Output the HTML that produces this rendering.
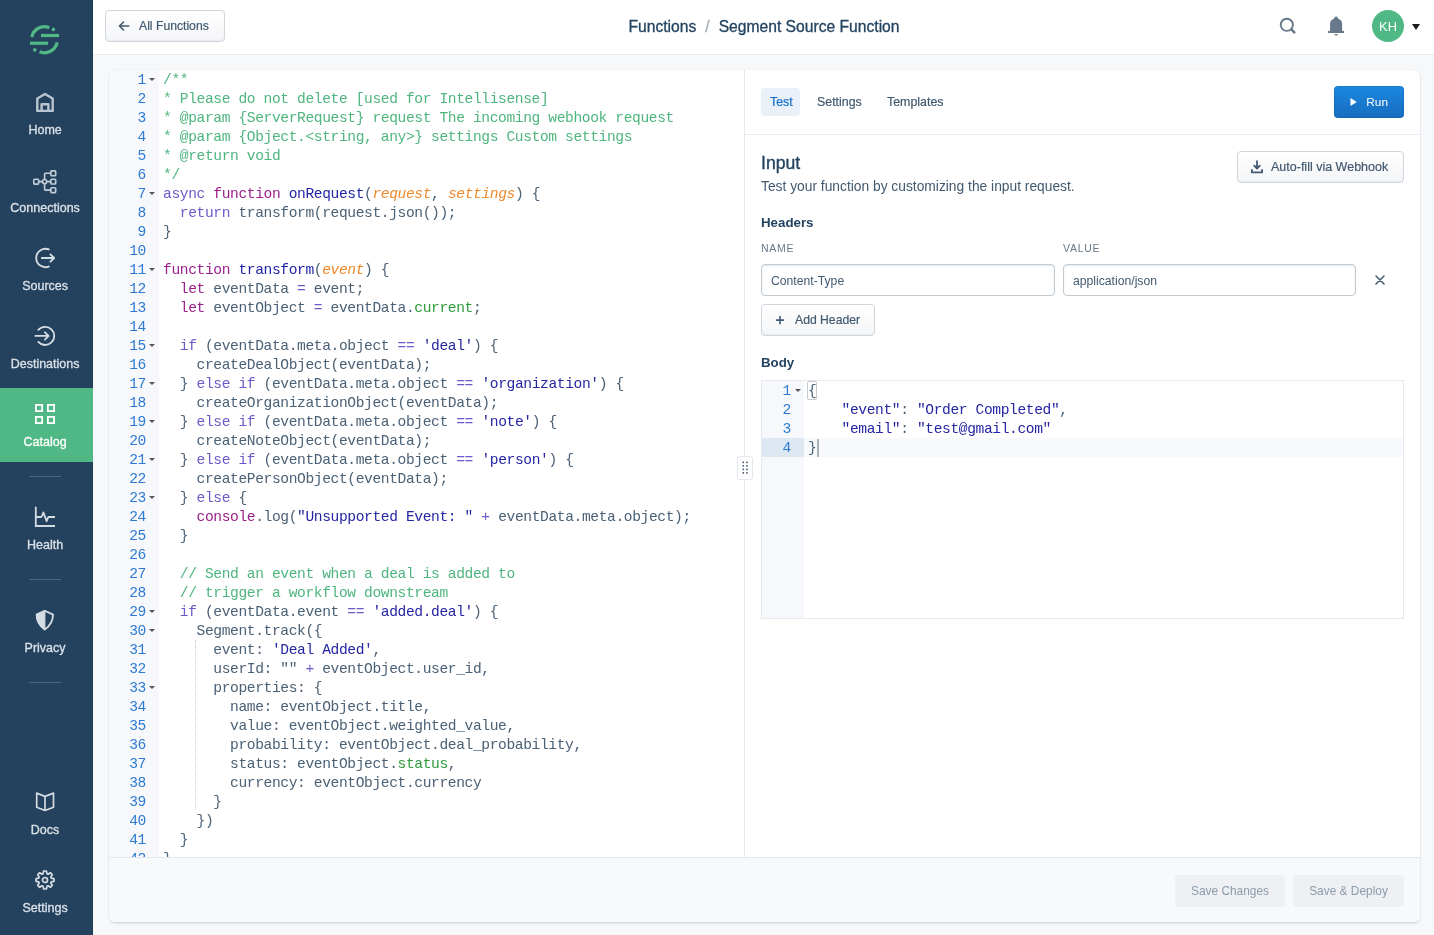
<!DOCTYPE html>
<html><head><meta charset="utf-8">
<style>
*{box-sizing:border-box;margin:0;padding:0}
html,body{width:1434px;height:935px;overflow:hidden;background:#F7F8FA;font-family:"Liberation Sans",sans-serif;color:#425A70}
#side{position:absolute;left:0;top:0;width:93px;height:935px;background:#24415D;border-right:1px solid #1F3A54}
.lbl{position:absolute;left:0;width:90.2px;text-align:center;color:#DAE1E8;font-size:12.5px;line-height:16px;white-space:nowrap;-webkit-text-stroke:0.3px currentColor}
.sep{position:absolute;left:29px;width:32px;height:1px;background:#4A6580}
#hdr{position:absolute;left:93px;top:0;width:1341px;height:55px;background:#fff;border-bottom:1px solid #E8EBEF}
.btn{position:absolute;background:linear-gradient(#FFFFFF,#F4F5F7);border:1px solid #D0D6DD;border-radius:4px;color:#425A70;font-size:12.2px;-webkit-text-stroke:0.2px currentColor;box-shadow:inset 0 -1px 1px rgba(67,90,111,.06)}
#card{position:absolute;left:109px;top:70px;width:1311px;height:852px;background:#fff;border-radius:6px;box-shadow:0 0 1px rgba(67,90,111,.35),0 2px 3px -1px rgba(67,90,111,.25);overflow:hidden}
#ed{position:absolute;left:0;top:0;width:635px;height:787px;overflow:hidden;font-family:"Liberation Mono",monospace;font-size:14.6px;letter-spacing:-0.381px;line-height:19px}
#gut{position:absolute;left:0;top:0;width:50px;height:787px;background:#F6F8FB}
.ln{position:absolute;left:0;width:37px;text-align:right;color:#2D7AD2}
.fd{position:absolute;left:40.4px;width:0;height:0;margin-top:-1px;border-left:3.1px solid transparent;border-right:3.1px solid transparent;border-top:3.9px solid #555}
.cl{position:absolute;left:54px;white-space:pre;color:#4B6176}
.c{color:#4EB57E}.k{color:#6A5BC9}.f{color:#9A1F8B}.n{color:#2024A8}.p{color:#EE8A2C;font-style:italic}.s{color:#2526A3}.g{color:#2E9B3A}.o{color:#6A5BC9}
#div{position:absolute;left:635px;top:0;width:1px;height:787px;background:#E4E7EB}
#rp{position:absolute;left:636px;top:0;width:675px;height:787px}
#foot{position:absolute;left:0;top:787px;width:1311px;height:65px;background:#F8F9FB;border-top:1px solid #E4E7EB}
.gb{position:absolute;background:#EFF0F3;border-radius:4px;color:#8C9CAB;font-size:11.9px;text-align:center;line-height:32px;height:32px}
.tab{position:absolute;top:24px;font-size:12.4px;line-height:16px;color:#425A70;-webkit-text-stroke:0.2px currentColor}
.lab{position:absolute;top:171px;font-size:10.5px;line-height:14px;letter-spacing:.7px;color:#66788A}
.inp{position:absolute;top:194px;height:32px;border:1px solid #C2CAD2;border-radius:4px;box-shadow:inset 0 1px 2px rgba(67,90,111,.14);padding-left:9px;font-size:12.2px;line-height:32px;color:#425A70}
#card,#side,#hdr{will-change:transform}
</style></head><body>
<div id="side">
 <svg style="position:absolute;left:29px;top:25px" width="32" height="30" viewBox="0 0 32 30" fill="none" stroke="#52B886" stroke-width="3.2">
  <g transform="translate(0.45 0)">
  <path d="M2.28 12.05 A13 13 0 0 1 19.87 2.7"/>
  <path d="M27.72 17.45 A13 13 0 0 1 10.13 26.8"/>
  <path d="M11.55 10.5 H29.55"/>
  <path d="M0.45 18.2 H18.65"/>
  <circle cx="23.95" cy="4.4" r="1.8" fill="#52B886" stroke="none"/>
  <circle cx="5.35" cy="24.9" r="1.8" fill="#52B886" stroke="none"/>
  </g>
 </svg>
 <svg style="position:absolute;left:35px;top:92px" width="20" height="21" viewBox="0 0 20 21" fill="none" stroke="#B9C5D0" stroke-width="2.4" stroke-linejoin="round">
  <path d="M2.3 18.9 V6.6 L10 1.9 L17.7 6.6 V18.9 Z"/>
  <path d="M6.6 18.9 V12.3 H13.4 V18.9"/>
 </svg>
 <div class="lbl" style="top:122px">Home</div>
 <svg style="position:absolute;left:32px;top:169px" width="26" height="26" viewBox="0 0 26 26" fill="none" stroke="#C3CED8" stroke-width="1.6">
  <rect x="1.8" y="10.2" width="4.8" height="4.9" rx="0.8"/>
  <circle cx="12.6" cy="12.6" r="2.1"/>
  <path d="M6.6 12.6 H10.5 M14.7 12.6 H18.9 M12.6 10.5 V5 Q12.6 4.2 13.4 4.2 H18.9 M12.6 14.7 V20.3 Q12.6 21.1 13.4 21.1 H18.9"/>
  <rect x="18.9" y="1.9" width="4.8" height="4.9" rx="0.8"/>
  <rect x="18.9" y="10.2" width="4.8" height="4.8" rx="0.8"/>
  <rect x="18.9" y="18.8" width="4.8" height="4.8" rx="0.8"/>
 </svg>
 <div class="lbl" style="top:200px">Connections</div>
 <svg style="position:absolute;left:34px;top:247px" width="22" height="22" viewBox="0 0 22 22" fill="none" stroke="#D6DEE5" stroke-width="1.8" stroke-linecap="round" stroke-linejoin="round">
  <path d="M14.8 2.45 A9.2 9.2 0 1 0 14.8 19.55"/>
  <path d="M7.8 11 H20.2 M16.4 7.3 L20.2 11 L16.4 14.7"/>
 </svg>
 <div class="lbl" style="top:278px">Sources</div>
 <svg style="position:absolute;left:34px;top:325px" width="22" height="22" viewBox="0 0 22 22" fill="none" stroke="#D6DEE5" stroke-width="1.8" stroke-linecap="round" stroke-linejoin="round">
  <path d="M4.3 4.9 A9.1 9.1 0 1 1 4.3 16.9"/>
  <path d="M1.4 10.9 H14.6 M10.9 7.3 L14.6 10.9 L10.9 14.6"/>
 </svg>
 <div class="lbl" style="top:356px">Destinations</div>
 <div style="position:absolute;left:0;top:388px;width:93px;height:74px;background:#4FB884;z-index:1"></div>
 <svg style="position:absolute;left:34px;top:403px;z-index:2" width="22" height="22" viewBox="0 0 22 22" fill="none" stroke="#fff" stroke-width="1.8">
  <rect x="1.9" y="1.9" width="6.2" height="6.2"/><rect x="13.9" y="1.9" width="6.2" height="6.2"/>
  <rect x="1.9" y="13.9" width="6.2" height="6.2"/><rect x="13.9" y="13.9" width="6.2" height="6.2"/>
 </svg>
 <div class="lbl" style="top:434px;color:#fff;z-index:2">Catalog</div>
 <div class="sep" style="top:476px"></div>
 <svg style="position:absolute;left:34px;top:506px" width="22" height="22" viewBox="0 0 22 22" fill="none" stroke="#D3DBE2" stroke-width="1.8">
  <path d="M1.8 0.8 V20 H21"/>
  <path d="M1.8 11 H7 Q7.6 11 8 10 L9.4 6.4 L12.6 15.2 L14 11.6 Q14.3 11 15 11 H21" stroke-linejoin="round"/>
 </svg>
 <div class="lbl" style="top:537px">Health</div>
 <div class="sep" style="top:579px"></div>
 <svg style="position:absolute;left:35px;top:609px" width="20" height="22" viewBox="0 0 20 22" stroke="#D6DEE5" stroke-width="1.8" stroke-linejoin="round">
  <path d="M9.8 1.8 L18 5.6 C18 12 15 17 9.8 20.6 C4.6 17 1.6 12 1.6 5.6 Z" fill="none"/>
  <path d="M9.8 1.8 L1.6 5.6 C1.6 12 4.6 17 9.8 20.6 Z" fill="#D6DEE5" stroke-width="1.2"/>
 </svg>
 <div class="lbl" style="top:640px">Privacy</div>
 <div class="sep" style="top:682px"></div>
 <svg style="position:absolute;left:34px;top:791px" width="22" height="21" viewBox="0 0 22 21" fill="none" stroke="#D3DBE2" stroke-width="1.7" stroke-linejoin="round">
  <path d="M11 5.4 L2.7 2.1 V16.2 L11 19.5 L19.5 16.2 V2.1 Z"/>
  <path d="M11 5.4 V19.5"/>
 </svg>
 <div class="lbl" style="top:822px">Docs</div>
 <svg style="position:absolute;left:34px;top:869px" width="22" height="22" viewBox="0 0 22 22" fill="none" stroke="#D6DEE5" stroke-width="1.7" stroke-linejoin="round">
  <path d="M9.07 4.69 L9.59 2.11 A9.0 9.0 0 0 1 12.41 2.11 L12.93 4.69 A6.6 6.6 0 0 1 14.10 5.17 L16.29 3.72 A9.0 9.0 0 0 1 18.28 5.71 L16.83 7.90 A6.6 6.6 0 0 1 17.31 9.07 L19.89 9.59 A9.0 9.0 0 0 1 19.89 12.41 L17.31 12.93 A6.6 6.6 0 0 1 16.83 14.10 L18.28 16.29 A9.0 9.0 0 0 1 16.29 18.28 L14.10 16.83 A6.6 6.6 0 0 1 12.93 17.31 L12.41 19.89 A9.0 9.0 0 0 1 9.59 19.89 L9.07 17.31 A6.6 6.6 0 0 1 7.90 16.83 L5.71 18.28 A9.0 9.0 0 0 1 3.72 16.29 L5.17 14.10 A6.6 6.6 0 0 1 4.69 12.93 L2.11 12.41 A9.0 9.0 0 0 1 2.11 9.59 L4.69 9.07 A6.6 6.6 0 0 1 5.17 7.90 L3.72 5.71 A9.0 9.0 0 0 1 5.71 3.72 L7.90 5.17 A6.6 6.6 0 0 1 9.07 4.69 Z"/>
  <circle cx="11" cy="11" r="2.5"/>
 </svg>
 <div class="lbl" style="top:900px">Settings</div>
</div>
<div id="hdr">
 <div class="btn" style="left:12px;top:10px;width:120px;height:32px">
  <svg style="position:absolute;left:12px;top:9px" width="12" height="12" viewBox="0 0 12 12" fill="none" stroke="#425A70" stroke-width="1.6" stroke-linecap="round" stroke-linejoin="round"><path d="M10.8 6 H1.6 M5.6 2 L1.4 6 L5.6 10"/></svg>
  <span style="position:absolute;left:33px;top:7px;line-height:16px">All Functions</span>
 </div>
 <div style="position:absolute;left:535.5px;top:17.2px;font-size:15.65px;line-height:20px;color:#234361;-webkit-text-stroke:0.3px currentColor;white-space:nowrap">Functions<span style="color:#A6B1BB;margin:0 9px 0 9px">/</span>Segment Source Function</div>
 <svg style="position:absolute;left:1186px;top:17px" width="18" height="18" viewBox="0 0 18 18" fill="none" stroke="#66788A" stroke-linecap="round"><circle cx="7.8" cy="7.8" r="6.1" stroke-width="1.9"/><path d="M12.6 12.6 L15.3 15.3" stroke-width="2.6"/></svg>
 <svg style="position:absolute;left:1234px;top:15px" width="18" height="22" viewBox="0 0 18 22" fill="#66788A"><path d="M3.1 16 V8.8 C3.1 5.3 5.6 3.4 9.1 3.4 C12.6 3.4 15.1 5.3 15.1 8.8 V16 Z"/><rect x="1.1" y="15.9" width="16" height="2.1"/><circle cx="9.1" cy="3.3" r="1.9"/><path d="M7 19 H11.2 L9.1 21.1 Z"/></svg>
 <div style="position:absolute;left:1279px;top:10px;width:32px;height:32px;border-radius:50%;background:#4FB884;color:#fff;font-size:12.8px;line-height:33px;text-align:center">KH</div>
 <div style="position:absolute;left:1318.5px;top:23.5px;width:0;height:0;border-left:4.8px solid transparent;border-right:4.8px solid transparent;border-top:6.2px solid #1B1B1B"></div>
</div>
<div id="card">
 <div id="ed"><div id="gut"></div>
<div style="position:absolute;left:86px;top:570px;width:0;height:170px;border-left:1px dotted #C8CDD2"></div>
<div class="ln" style="top:1px">1</div>
<div class="fd" style="top:9px"></div>
<div class="cl" style="top:1px"><span class="c">/**</span></div>
<div class="ln" style="top:20px">2</div>
<div class="cl" style="top:20px"><span class="c">* Please do not delete [used for Intellisense]</span></div>
<div class="ln" style="top:39px">3</div>
<div class="cl" style="top:39px"><span class="c">* @param {ServerRequest} request The incoming webhook request</span></div>
<div class="ln" style="top:58px">4</div>
<div class="cl" style="top:58px"><span class="c">* @param {Object.&lt;string, any&gt;} settings Custom settings</span></div>
<div class="ln" style="top:77px">5</div>
<div class="cl" style="top:77px"><span class="c">* @return void</span></div>
<div class="ln" style="top:96px">6</div>
<div class="cl" style="top:96px"><span class="c">*/</span></div>
<div class="ln" style="top:115px">7</div>
<div class="fd" style="top:123px"></div>
<div class="cl" style="top:115px"><span class="k">async</span> <span class="f">function</span> <span class="n">onRequest</span>(<span class="p">request</span>, <span class="p">settings</span>) {</div>
<div class="ln" style="top:134px">8</div>
<div class="cl" style="top:134px">  <span class="k">return</span> transform(request.json());</div>
<div class="ln" style="top:153px">9</div>
<div class="cl" style="top:153px">}</div>
<div class="ln" style="top:172px">10</div>
<div class="cl" style="top:172px"></div>
<div class="ln" style="top:191px">11</div>
<div class="fd" style="top:199px"></div>
<div class="cl" style="top:191px"><span class="f">function</span> <span class="n">transform</span>(<span class="p">event</span>) {</div>
<div class="ln" style="top:210px">12</div>
<div class="cl" style="top:210px">  <span class="f">let</span> eventData <span class="o">=</span> event;</div>
<div class="ln" style="top:229px">13</div>
<div class="cl" style="top:229px">  <span class="f">let</span> eventObject <span class="o">=</span> eventData.<span class="g">current</span>;</div>
<div class="ln" style="top:248px">14</div>
<div class="cl" style="top:248px"></div>
<div class="ln" style="top:267px">15</div>
<div class="fd" style="top:275px"></div>
<div class="cl" style="top:267px">  <span class="k">if</span> (eventData.meta.object <span class="o">==</span> <span class="s">&#x27;deal&#x27;</span>) {</div>
<div class="ln" style="top:286px">16</div>
<div class="cl" style="top:286px">    createDealObject(eventData);</div>
<div class="ln" style="top:305px">17</div>
<div class="fd" style="top:313px"></div>
<div class="cl" style="top:305px">  } <span class="k">else</span> <span class="k">if</span> (eventData.meta.object <span class="o">==</span> <span class="s">&#x27;organization&#x27;</span>) {</div>
<div class="ln" style="top:324px">18</div>
<div class="cl" style="top:324px">    createOrganizationObject(eventData);</div>
<div class="ln" style="top:343px">19</div>
<div class="fd" style="top:351px"></div>
<div class="cl" style="top:343px">  } <span class="k">else</span> <span class="k">if</span> (eventData.meta.object <span class="o">==</span> <span class="s">&#x27;note&#x27;</span>) {</div>
<div class="ln" style="top:362px">20</div>
<div class="cl" style="top:362px">    createNoteObject(eventData);</div>
<div class="ln" style="top:381px">21</div>
<div class="fd" style="top:389px"></div>
<div class="cl" style="top:381px">  } <span class="k">else</span> <span class="k">if</span> (eventData.meta.object <span class="o">==</span> <span class="s">&#x27;person&#x27;</span>) {</div>
<div class="ln" style="top:400px">22</div>
<div class="cl" style="top:400px">    createPersonObject(eventData);</div>
<div class="ln" style="top:419px">23</div>
<div class="fd" style="top:427px"></div>
<div class="cl" style="top:419px">  } <span class="k">else</span> {</div>
<div class="ln" style="top:438px">24</div>
<div class="cl" style="top:438px">    <span class="f">console</span>.log(<span class="s">&quot;Unsupported Event: &quot;</span> <span class="o">+</span> eventData.meta.object);</div>
<div class="ln" style="top:457px">25</div>
<div class="cl" style="top:457px">  }</div>
<div class="ln" style="top:476px">26</div>
<div class="cl" style="top:476px"></div>
<div class="ln" style="top:495px">27</div>
<div class="cl" style="top:495px">  <span class="c">// Send an event when a deal is added to</span></div>
<div class="ln" style="top:514px">28</div>
<div class="cl" style="top:514px">  <span class="c">// trigger a workflow downstream</span></div>
<div class="ln" style="top:533px">29</div>
<div class="fd" style="top:541px"></div>
<div class="cl" style="top:533px">  <span class="k">if</span> (eventData.event <span class="o">==</span> <span class="s">&#x27;added.deal&#x27;</span>) {</div>
<div class="ln" style="top:552px">30</div>
<div class="fd" style="top:560px"></div>
<div class="cl" style="top:552px">    Segment.track({</div>
<div class="ln" style="top:571px">31</div>
<div class="cl" style="top:571px">      event: <span class="s">&#x27;Deal Added&#x27;</span>,</div>
<div class="ln" style="top:590px">32</div>
<div class="cl" style="top:590px">      userId: &quot;&quot; <span class="o">+</span> eventObject.user_id,</div>
<div class="ln" style="top:609px">33</div>
<div class="fd" style="top:617px"></div>
<div class="cl" style="top:609px">      properties: {</div>
<div class="ln" style="top:628px">34</div>
<div class="cl" style="top:628px">        name: eventObject.title,</div>
<div class="ln" style="top:647px">35</div>
<div class="cl" style="top:647px">        value: eventObject.weighted_value,</div>
<div class="ln" style="top:666px">36</div>
<div class="cl" style="top:666px">        probability: eventObject.deal_probability,</div>
<div class="ln" style="top:685px">37</div>
<div class="cl" style="top:685px">        status: eventObject.<span class="g">status</span>,</div>
<div class="ln" style="top:704px">38</div>
<div class="cl" style="top:704px">        currency: eventObject.currency</div>
<div class="ln" style="top:723px">39</div>
<div class="cl" style="top:723px">      }</div>
<div class="ln" style="top:742px">40</div>
<div class="cl" style="top:742px">    })</div>
<div class="ln" style="top:761px">41</div>
<div class="cl" style="top:761px">  }</div>
<div class="ln" style="top:780px">42</div>
<div class="cl" style="top:780px">}</div>
</div>
 <div id="div"></div>
 <div style="position:absolute;left:628px;top:386px;width:15.5px;height:24px;background:#fff;border:1px solid #E4E7EB;border-radius:2.5px">
  <svg style="position:absolute;left:4px;top:4.4px" width="7" height="13" viewBox="0 0 7 13" fill="#3A5068"><circle cx="1.3" cy="1.3" r=".9"/><circle cx="5" cy="1.3" r=".9"/><circle cx="1.3" cy="4.8" r=".9"/><circle cx="5" cy="4.8" r=".9"/><circle cx="1.3" cy="8.3" r=".9"/><circle cx="5" cy="8.3" r=".9"/><circle cx="1.3" cy="11.8" r=".9"/><circle cx="5" cy="11.8" r=".9"/></svg>
 </div>
 <div id="rp">
 <div style="position:absolute;left:16px;top:18px;width:39px;height:28px;border-radius:4px;background:#EAF0F8"></div>
 <div class="tab" style="left:25px;color:#1070CA">Test</div>
 <div class="tab" style="left:72px">Settings</div>
 <div class="tab" style="left:142px">Templates</div>
 <div style="position:absolute;left:589px;top:16px;width:70px;height:32px;border-radius:4px;background:linear-gradient(#1B87E0,#176DBF);box-shadow:inset 0 0 0 1px rgba(0,0,0,.08)">
  <svg style="position:absolute;left:15.8px;top:11px" width="8" height="10" viewBox="0 0 8 10"><path d="M0.5 1 L6.8 5 L0.5 9 Z" fill="#fff"/></svg>
  <span style="position:absolute;left:32.3px;top:8px;font-size:11.8px;line-height:16px;color:#fff">Run</span>
 </div>
 <div style="position:absolute;left:0;top:64px;width:675px;height:1px;background:#E8EBEF"></div>
 <div style="position:absolute;left:16px;top:82px;font-size:17.6px;line-height:22px;color:#234361;-webkit-text-stroke:0.35px #234361">Input</div>
 <div style="position:absolute;left:16px;top:108px;font-size:13.8px;line-height:18px;color:#425A70;white-space:nowrap">Test your function by customizing the input request.</div>
 <div class="btn" style="left:492px;top:81px;width:167px;height:32px">
  <svg style="position:absolute;left:12px;top:8px" width="14" height="14" viewBox="0 0 14 14" fill="none" stroke="#425A70" stroke-width="1.8" stroke-linecap="round" stroke-linejoin="round"><path d="M7 1.2 V8.4 M4.2 5.7 L7 8.5 L9.8 5.7 M1.9 9.8 V12.4 H12.1 V9.8"/></svg>
  <span style="position:absolute;left:33px;top:7px;line-height:16px;font-size:12.5px">Auto-fill via Webhook</span>
 </div>
 <div style="position:absolute;left:16px;top:143.7px;font-size:13.3px;line-height:17px;font-weight:bold;color:#234361">Headers</div>
 <div class="lab" style="left:16px">NAME</div>
 <div class="lab" style="left:318px">VALUE</div>
 <div class="inp" style="left:16px;width:294px">Content-Type</div>
 <div class="inp" style="left:318px;width:293px">application/json</div>
 <svg style="position:absolute;left:630px;top:205px" width="10" height="10" viewBox="0 0 10 10" stroke="#425A70" stroke-width="1.55" stroke-linecap="round"><path d="M1 1 L9 9 M9 1 L1 9"/></svg>
 <div class="btn" style="left:16px;top:234px;width:114px;height:32px">
  <svg style="position:absolute;left:13px;top:10px" width="10" height="10" viewBox="0 0 10 10" stroke="#425A70" stroke-width="1.6" stroke-linecap="butt"><path d="M5 1 V9.2 M0.9 5.1 H9.1"/></svg>
  <span style="position:absolute;left:33px;top:7px;line-height:16px">Add Header</span>
 </div>
 <div style="position:absolute;left:16px;top:283.7px;font-size:13.3px;line-height:17px;font-weight:bold;color:#234361">Body</div>
 <div id="body" style="position:absolute;left:16px;top:310px;width:643px;height:239px;border:1px solid #E6E9ED;font-family:'Liberation Mono',monospace;font-size:14.6px;letter-spacing:-0.381px;line-height:19px;overflow:hidden">
  <div style="position:absolute;left:0;top:0;width:42px;height:237px;background:#F6F8FB"></div>
  <div style="position:absolute;left:42px;top:57px;width:600px;height:19px;background:#F7F9FC"></div>
  <div style="position:absolute;left:0;top:57px;width:42px;height:19px;background:#DDE8F3"></div>
  <div class="ln" style="top:1px;width:29px">1</div><div class="fd" style="left:33px;top:9px"></div>
  <div class="ln" style="top:20px;width:29px">2</div>
  <div class="ln" style="top:39px;width:29px">3</div>
  <div class="ln" style="top:58px;width:29px">4</div>
  <div style="position:absolute;left:45px;top:0;width:10px;height:19px;border:1px solid #C3CAD1;border-radius:2px"></div>
  <div class="cl" style="left:46px;top:1px">{</div>
  <div class="cl" style="left:46px;top:20px">    <span class="s">"event"</span>: <span class="s">"Order Completed"</span>,</div>
  <div class="cl" style="left:46px;top:39px">    <span class="s">"email"</span>: <span class="s">"test@gmail.com"</span></div>
  <div class="cl" style="left:46px;top:58px">}</div>
  <div style="position:absolute;left:55px;top:58px;width:2px;height:18px;background:#A9B1B9"></div>
 </div>
</div>
 <div id="foot">
  <div class="gb" style="left:1066px;top:16.5px;width:110px">Save Changes</div>
  <div class="gb" style="left:1184px;top:16.5px;width:111px">Save &amp; Deploy</div>
 </div>
</div>
</body></html>
